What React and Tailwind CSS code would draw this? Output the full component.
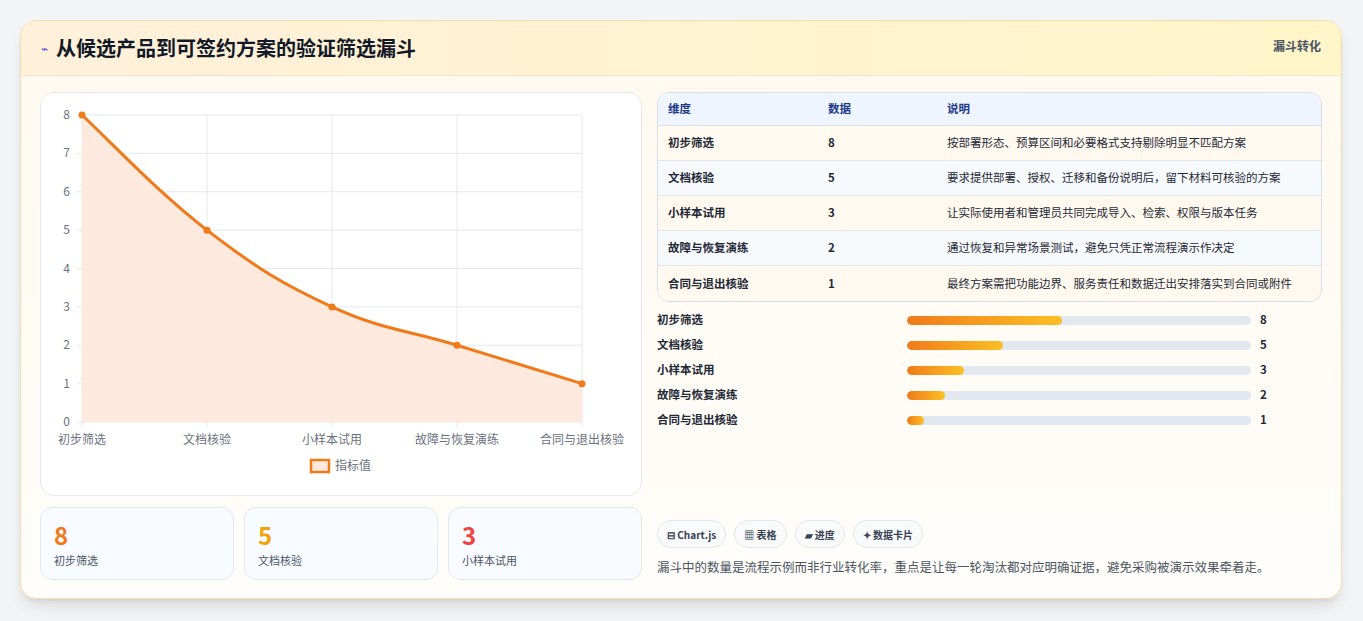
import React from "react";

const F = { fontFamily: '"Noto Sans CJK SC","Noto Sans",sans-serif' };
const rows = [
  ["初步筛选", 8, "按部署形态、预算区间和必要格式支持剔除明显不匹配方案"],
  ["文档核验", 5, "要求提供部署、授权、迁移和备份说明后，留下材料可核验的方案"],
  ["小样本试用", 3, "让实际使用者和管理员共同完成导入、检索、权限与版本任务"],
  ["故障与恢复演练", 2, "通过恢复和异常场景测试，避免只凭正常流程演示作决定"],
  ["合同与退出核验", 1, "最终方案需把功能边界、服务责任和数据迁出安排落实到合同或附件"],
];
const widths = [45, 28, 16.5, 11, 5];

function Chart() {
  const X0 = 41, Y0 = 329, H = 307;
  const xs = [0, 125, 250, 375, 500].map((v) => v + X0);
  const y = (v) => Y0 - (v * H) / 8;
  const vals = [8, 5, 3, 2, 1];
  const pts = vals.map((v, i) => [xs[i], y(v)]);
  let d = `M${pts[0][0]},${pts[0][1]}`;
  for (let i = 0; i < pts.length - 1; i++) {
    const p0 = pts[i - 1] || pts[i], p1 = pts[i], p2 = pts[i + 1], p3 = pts[i + 2] || p2;
    const t = 0.2;
    d += ` C${p1[0] + (p2[0] - p0[0]) * t},${p1[1] + (p2[1] - p0[1]) * t} ${p2[0] - (p3[0] - p1[0]) * t},${p2[1] - (p3[1] - p1[1]) * t} ${p2[0]},${p2[1]}`;
  }
  const area = d + ` L${xs[4]},${Y0} L${xs[0]},${Y0} Z`;
  const labels = ["初步筛选", "文档核验", "小样本试用", "故障与恢复演练", "合同与退出核验"];
  return (
    <svg width="600" height="401" style={F}>
      {[0, 1, 2, 3, 4, 5, 6, 7, 8].map((v) => (
        <g key={v}>
          <line x1={X0 - 5} x2={xs[4]} y1={y(v)} y2={y(v)} stroke="#e5e7eb" />
          <text x={X0 - 12} y={y(v) + 4} fontSize="12" fill="#6b7280" textAnchor="end">{v}</text>
        </g>
      ))}
      {xs.map((x, i) => (
        <g key={i}>
          <line x1={x} x2={x} y1={y(8)} y2={Y0 + 5} stroke="#e5e7eb" />
          <text x={x} y={Y0 + 22} fontSize="12" fill="#6b7280" textAnchor="middle">{labels[i]}</text>
        </g>
      ))}
      <path d={area} fill="#fde9dd" />
      <path d={d} fill="none" stroke="#f07a1a" strokeWidth="3" />
      {pts.map((p, i) => (
        <circle key={i} cx={p[0]} cy={p[1]} r="3.5" fill="#f07a1a" />
      ))}
      <rect x="270" y="367" width="18" height="12" fill="#fde9dd" stroke="#f07a1a" strokeWidth="2.5" />
      <text x="294" y="377" fontSize="12" fill="#6b7280">指标值</text>
    </svg>
  );
}

export default function App() {
  return (
    <div className="w-[1363px] h-[621px] bg-[#f3f4f6] pt-[20px] pl-[20px]" style={F}>
      <div className="w-[1322px] h-[579px] rounded-[16px] border border-[#f7dcae] bg-gradient-to-b from-[#fff9ef] to-[#fffdfa] shadow-lg overflow-hidden">
        <div className="h-[55px] flex items-center justify-between px-[20px] bg-gradient-to-r from-[#fff0da] to-[#fff5c8] border-b border-[#f3e6cf]">
          <div className="flex items-center gap-2">
            <span className="text-[#4f46e5] text-[12px]">⌁</span>
            <span className="text-[20px] font-bold text-[#111827]">从候选产品到可签约方案的验证筛选漏斗</span>
          </div>
          <span className="text-[12px] font-semibold text-[#4b5563] self-start mt-[16px]">漏斗转化</span>
        </div>
        <div className="flex gap-[15px] px-[19px] pt-[16px]">
          <div className="w-[603px] flex flex-col gap-[11px]">
            <div className="h-[404px] rounded-[14px] border border-[#e5e7eb] bg-white">
              <Chart />
            </div>
            <div className="flex gap-[10px]">
              {[["8", "初步筛选", "text-[#f07a1a]"], ["5", "文档核验", "text-[#f5a30b]"], ["3", "小样本试用", "text-[#ef4444]"]].map(([n, l, c]) => (
                <div key={l} className="w-[194px] h-[73px] rounded-[12px] border border-[#e5e7eb] bg-[#f8fbff] px-[13px] pt-[12px]">
                  <div className={`text-[24px] font-bold leading-[30px] ${c}`}>{n}</div>
                  <div className="text-[11px] text-[#4b5563] mt-[2px]">{l}</div>
                </div>
              ))}
            </div>
          </div>
          <div className="w-[667px] flex flex-col">
            <div className="rounded-[12px] border border-[#d8dee8] overflow-hidden text-[11.5px] text-[#1f2937]">
              <div className="h-[33px] flex items-center bg-[#eef5ff] text-[#1e3a8a] font-semibold border-b border-[#d8dee8]">
                <span className="w-[170px] pl-[10px]">维度</span>
                <span className="w-[119px]">数据</span>
                <span>说明</span>
              </div>
              {rows.map((r, i) => (
                <div key={i} className={`h-[35px] flex items-center ${i % 2 ? "bg-[#f7fafc]" : "bg-[#fff9ef]"} ${i < 4 ? "border-b border-[#e5e7eb]" : ""}`}>
                  <span className="w-[170px] pl-[10px] font-semibold">{r[0]}</span>
                  <span className="w-[119px] font-semibold">{r[1]}</span>
                  <span>{r[2]}</span>
                </div>
              ))}
            </div>
            <div className="mt-[9px] flex flex-col gap-[7px]">
              {rows.map((r, i) => (
                <div key={i} className="h-[18px] flex items-center text-[11.5px] font-semibold text-[#1f2937]">
                  <span className="w-[250px]">{r[0]}</span>
                  <div className="w-[344px] h-[9px] rounded-full bg-[#e2e8f0] overflow-hidden">
                    <div className="h-full rounded-full bg-gradient-to-r from-[#f07a1a] to-[#fbbf24]" style={{ width: widths[i] + "%" }} />
                  </div>
                  <span className="ml-[9px]">{r[1]}</span>
                </div>
              ))}
            </div>
            <div className="mt-[91px] flex gap-[8px] text-[10px] font-semibold text-[#374151]">
              {["⊟ Chart.js", "▦ 表格", "▰ 进度", "✦ 数据卡片"].map((t) => (
                <span key={t} className="h-[28px] px-[9px] flex items-center rounded-full border border-[#e5e7eb] bg-[#f8fafc]">{t}</span>
              ))}
            </div>
            <div className="mt-[10px] text-[12.5px] text-[#4b5563]">漏斗中的数量是流程示例而非行业转化率，重点是让每一轮淘汰都对应明确证据，避免采购被演示效果牵着走。</div>
          </div>
        </div>
      </div>
    </div>
  );
}
